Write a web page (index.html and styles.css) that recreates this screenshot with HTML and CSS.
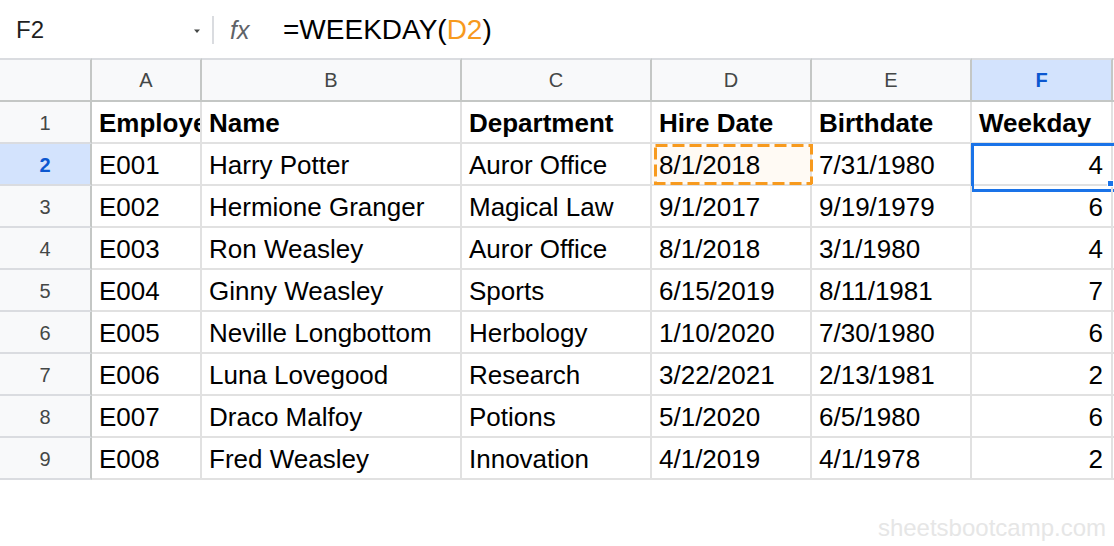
FILE: index.html
```html
<!DOCTYPE html>
<html lang="en">
<head>
<meta charset="utf-8">
<title>WEEKDAY</title>
<link rel="stylesheet" href="styles.css">
</head>
<body>
<div class="app">
  <div class="fbar">
    <div class="namebox">
      <span class="ref">F2</span>
      <svg class="caret" width="8" height="6" viewBox="0 0 8 6"><path d="M1 1.5h6L4 5z" fill="#444746"/></svg>
    </div>
    <div class="divider"></div>
    <div class="fx">fx</div>
    <div class="formula">=WEEKDAY(<span class="arg">D2</span>)</div>
  </div>

  <div class="sheet">
    <div class="hd corner"></div>
    <div class="hd col">A</div>
    <div class="hd col">B</div>
    <div class="hd col">C</div>
    <div class="hd col">D</div>
    <div class="hd col">E</div>
    <div class="hd col sel">F</div>
    <div class="hd col"></div>

    <div class="rh">1</div>
    <div class="c b">Employee ID</div>
    <div class="c b">Name</div>
    <div class="c b">Department</div>
    <div class="c b">Hire Date</div>
    <div class="c b">Birthdate</div>
    <div class="c b">Weekday</div>
    <div class="c g"></div>

    <div class="rh sel">2</div>
    <div class="c">E001</div>
    <div class="c">Harry Potter</div>
    <div class="c">Auror Office</div>
    <div class="c ref-cell">8/1/2018<svg class="ants" viewBox="0 0 162 42"><rect x="3.5" y="1.5" width="156" height="38" fill="none" stroke="#f79a1e" stroke-width="3" stroke-dasharray="12 5"/></svg></div>
    <div class="c">7/31/1980</div>
    <div class="c num active">4</div>
    <div class="c g"></div>

    <div class="rh">3</div>
    <div class="c">E002</div>
    <div class="c">Hermione Granger</div>
    <div class="c">Magical Law</div>
    <div class="c">9/1/2017</div>
    <div class="c">9/19/1979</div>
    <div class="c num">6</div>
    <div class="c g"></div>

    <div class="rh">4</div>
    <div class="c">E003</div>
    <div class="c">Ron Weasley</div>
    <div class="c">Auror Office</div>
    <div class="c">8/1/2018</div>
    <div class="c">3/1/1980</div>
    <div class="c num">4</div>
    <div class="c g"></div>

    <div class="rh">5</div>
    <div class="c">E004</div>
    <div class="c">Ginny Weasley</div>
    <div class="c">Sports</div>
    <div class="c">6/15/2019</div>
    <div class="c">8/11/1981</div>
    <div class="c num">7</div>
    <div class="c g"></div>

    <div class="rh">6</div>
    <div class="c">E005</div>
    <div class="c">Neville Longbottom</div>
    <div class="c">Herbology</div>
    <div class="c">1/10/2020</div>
    <div class="c">7/30/1980</div>
    <div class="c num">6</div>
    <div class="c g"></div>

    <div class="rh">7</div>
    <div class="c">E006</div>
    <div class="c">Luna Lovegood</div>
    <div class="c">Research</div>
    <div class="c">3/22/2021</div>
    <div class="c">2/13/1981</div>
    <div class="c num">2</div>
    <div class="c g"></div>

    <div class="rh">8</div>
    <div class="c">E007</div>
    <div class="c">Draco Malfoy</div>
    <div class="c">Potions</div>
    <div class="c">5/1/2020</div>
    <div class="c">6/5/1980</div>
    <div class="c num">6</div>
    <div class="c g"></div>

    <div class="rh">9</div>
    <div class="c">E008</div>
    <div class="c">Fred Weasley</div>
    <div class="c">Innovation</div>
    <div class="c">4/1/2019</div>
    <div class="c">4/1/1978</div>
    <div class="c num">2</div>
    <div class="c g"></div>
  </div>

  <div class="footer"><span class="watermark">sheetsbootcamp.com</span></div>
</div>
</body>
</html>
```

FILE: styles.css
```css
* { box-sizing: border-box; }

html, body {
  margin: 0;
  padding: 0;
  background: #ffffff;
}

.app {
  width: 1114px;
  height: 546px;
  display: flex;
  flex-direction: column;
  font-family: "Liberation Sans", Arial, sans-serif;
  overflow: hidden;
}

/* formula bar */
.fbar {
  height: 58px;
  flex: none;
  display: flex;
  align-items: center;
  padding-top: 2px;
}

.namebox {
  width: 212px;
  height: 100%;
  display: flex;
  align-items: center;
  padding-left: 16px;
  padding-right: 11px;
}

.ref {
  font-size: 24px;
  color: #1f1f1f;
  flex: 1;
}

.caret {
  display: block;
  margin-top: 1px;
}

.divider {
  width: 2px;
  height: 28px;
  background: #dadce0;
}

.fx {
  width: 69px;
  padding-left: 16px;
  font-size: 25px;
  font-style: italic;
  color: #5f6368;
}

.formula {
  font-size: 28px;
  color: #000000;
}

.arg {
  color: #f79a1e;
}

/* grid */
.sheet {
  flex: none;
  display: grid;
  grid-template-columns: 92px 110px 260px 190px 160px 160px 141px 1fr;
  grid-template-rows: 44px;
  grid-auto-rows: 42px;
}

.hd {
  background: #f8f9fa;
  border-top: 2px solid #dadce0;
  border-right: 2px solid #c4c7c5;
  border-bottom: 2px solid #c4c7c5;
  display: flex;
  align-items: center;
  justify-content: center;
  font-size: 20px;
  color: #444746;
  padding-top: 1px;
}

.hd.sel {
  background: #d3e3fd;
  color: #0b57d0;
  font-weight: bold;
}

.rh {
  background: #f8f9fa;
  border-right: 2px solid #c4c7c5;
  border-bottom: 2px solid #dadce0;
  display: flex;
  align-items: center;
  justify-content: center;
  font-size: 20px;
  color: #444746;
  padding-top: 2px;
}

.rh.sel {
  background: #d3e3fd;
  color: #0b57d0;
  font-weight: bold;
}

.c {
  position: relative;
  border-right: 2px solid #e1e1e1;
  border-bottom: 2px solid #e1e1e1;
  padding: 1px 7px 0;
  font-size: 26px;
  line-height: 40px;
  color: #000000;
  white-space: nowrap;
  overflow: hidden;
}

.c.b {
  font-weight: bold;
}

.c.num {
  text-align: right;
  padding-right: 8px;
}

.c.g {
  border-right: none;
}

.ref-cell {
  background: #fffaf4;
  overflow: visible;
}

.ants {
  position: absolute;
  left: 0;
  top: 0;
  width: 162px;
  height: 42px;
  pointer-events: none;
}

.active {
  overflow: visible;
}

.active::after {
  content: "";
  position: absolute;
  left: -1px;
  top: -1px;
  width: 141px;
  height: 43px;
  border: 3px solid #1a73e8;
  pointer-events: none;
}

.active::before {
  content: "";
  position: absolute;
  right: -3px;
  bottom: -3px;
  width: 5px;
  height: 5px;
  background: #1a73e8;
  border: 1px solid #ffffff;
  z-index: 2;
}

/* footer */
.footer {
  flex: 1;
  display: flex;
  justify-content: flex-end;
  align-items: flex-end;
  padding: 0 8px 4px 0;
}

.watermark {
  font-size: 24px;
  color: #e6e6e6;
}
```
